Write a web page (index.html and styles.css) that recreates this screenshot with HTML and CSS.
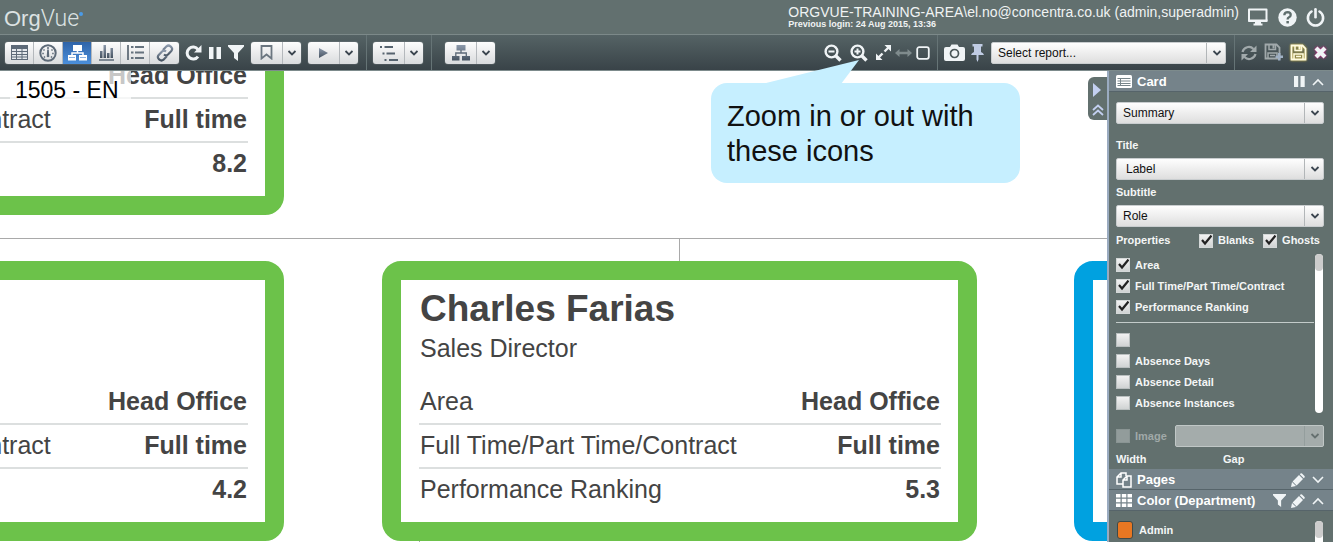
FILE: index.html
```html
<!DOCTYPE html>
<html lang="en">
<head>
<meta charset="utf-8">
<title>OrgVue</title>
<link rel="stylesheet" href="styles.css">
</head>
<body>
<svg class="defs" aria-hidden="true">
  <linearGradient id="steel" x1="0" y1="0" x2="0" y2="1"><stop offset="0" stop-color="#8c99ab"/><stop offset="1" stop-color="#465361"/></linearGradient>
  <symbol id="chev" viewBox="0 0 10 8"><path d="M1.500 2 5 5.500 8.500 2" fill="none" stroke="currentColor" stroke-width="1.800"/></symbol>
  <symbol id="pencil" viewBox="0 0 14 14"><path d="M0 14 1 9 5 13zM1.600 8.400 8 2 12 6 5.600 12.400zM8.800 1.200 9.500.5q.8-.6 1.500 0l2.500 2.500q.6.800 0 1.500l-.7.700z" fill="currentColor"/></symbol>
  <symbol id="funnel" viewBox="0 0 16 16"><path d="M0 0h16v1.500L10 8v8l-4-3V8L0 1.500z" fill="currentColor"/></symbol>
  <symbol id="disk" viewBox="0 0 17 17"><path d="M1.500 1.500h11l3 3v11h-14z" fill="none" stroke="currentColor" stroke-width="1.800"/><path d="M5 2v4.500h6.500V2M4 15.500V10h9v5.500M6 12.500h5" fill="none" stroke="currentColor" stroke-width="1.500"/><path d="M8.500 2h2v3.500h-2z" fill="currentColor"/></symbol>
</svg>

<header class="masthead">
  <div class="logo"><span class="logo-org">Org</span><span class="logo-vue">Vue</span><i class="logo-dot"></i></div>
  <div class="account">
    <div class="user">ORGVUE-TRAINING-AREA\el.no@concentra.co.uk (admin,superadmin)</div>
    <div class="login">Previous login: 24 Aug 2015, 13:36</div>
  </div>
  <div class="session">
    <button class="icon" aria-label="Display"><svg width="22" height="18" viewBox="0 0 22 18"><path d="M2 1.500h17.500v11.500H2z" fill="none" stroke="currentColor" stroke-width="2" stroke-linejoin="round"/><path d="M1.500 11.500h19v2h-19zM8 13h6v2.500h1.500v2h-9v-2H8z" fill="currentColor"/></svg></button>
    <button class="icon" aria-label="Help"><svg width="19" height="19" viewBox="0 0 19 19"><circle cx="9.500" cy="9.500" r="9.200" fill="currentColor"/><path d="M6.300 7.300Q6.500 4.200 9.700 4.200 12.800 4.400 12.700 7 12.600 8.500 11 9.300 9.600 10 9.600 11.500" fill="none" stroke="#5f6e6d" stroke-width="2.300"/><path d="M8.400 13h2.500v2.400H8.400z" fill="#5f6e6d"/></svg></button>
    <button class="icon" aria-label="Log out"><svg width="19" height="19" viewBox="0 0 19 19"><path d="M5.500 3.500a7.600 7.600 0 1 0 8 0" fill="none" stroke="currentColor" stroke-width="2.600" stroke-linecap="round"/><path d="M9.500 1.300v8" stroke="currentColor" stroke-width="2.600" stroke-linecap="round"/></svg></button>
  </div>
</header>

<nav class="toolbar">
  <div class="segments">
    <button aria-label="Table"><svg width="17" height="15" viewBox="0 0 17 15"><path d="M0 0h17v15H0z" fill="#5d6a78"/><path d="M1 4h4v2H1zM6 4h4.500v2H6zM11.500 4H16v2h-4.500zM1 7h4v2H1zM6 7h4.500v2H6zM11.500 7H16v2h-4.500zM1 10h4v1.500H1zM6 10h4.500v1.500H6zM11.500 10H16v1.500h-4.500zM1 12.500h4V14H1zM6 12.500h4.500V14H6zM11.500 12.500H16V14h-4.500z" fill="#e4e8ec"/></svg></button>
    <button aria-label="Dashboard"><svg width="18" height="18" viewBox="0 0 18 18"><circle cx="9" cy="9" r="7.700" fill="none" stroke="#5d6a78" stroke-width="2"/><path d="M9 3v2M4.500 5.500l1 1M13.500 5.500l-1 1M3.300 9.500h1.500M13.200 9.500h1.500M5 13.500l1-1M13 13.500l-1-1" stroke="#5d6a78" stroke-width="1.500"/><path d="M8.200 5.500h1.600l.4 6a1.300 1.300 0 1 1-2.400 0z" fill="#5d6a78"/></svg></button>
    <button class="on" aria-label="Organisation chart"><svg width="19" height="16" viewBox="0 0 19 16"><path d="M5 0h9v6H5zM0 10h8v5.500H0zM11 10h8v5.500h-8z" fill="#fff"/><path d="M9.500 5v3M4 11V8h11v3" fill="none" stroke="#fff" stroke-width="1.500"/><path d="M1 12.500h6M12 12.500h6" stroke="#8fb4e0"/></svg></button>
    <button aria-label="Bar chart"><svg width="17" height="17" viewBox="0 0 17 17"><path d="M2 7h2.500v7H2zM5.500 1H8v13H5.500zM9 9h2.500v5H9zM12.500 4H15v10h-2.500z" fill="url(#steel)"/><path d="M1 16h15" stroke="#5d6a78" stroke-width="1.500"/></svg></button>
    <button aria-label="List"><svg width="17" height="15" viewBox="0 0 17 15"><path d="M1 0v15" stroke="#465361" stroke-width="1.500"/><path d="M4 2h2.500M4 7.500h2.500M4 13h2.500M8 2h9M8 7.500h9M8 13h9" stroke="#66737f" stroke-width="2"/></svg></button>
    <button aria-label="Link"><svg width="18" height="18" viewBox="0 0 18 18"><g fill="none" stroke="url(#steel)" stroke-width="2.200"><path d="m7 6 3.500-3.700q2-1.600 4 0l.8.800q1.700 2 0 3.900L12 10.500q-2 1.700-4 0"/><path d="m11 12-3.500 3.700q-2 1.600-4 0l-.8-.8q-1.700-2 0-3.900L6 7.500q2-1.700 4 0"/></g></svg></button>
  </div>
  <div class="glyphs left">
    <button class="icon" aria-label="Reload"><svg width="17" height="16" viewBox="0 0 17 16"><path d="M13 11.500a6 6 0 1 1 0-7" fill="none" stroke="currentColor" stroke-width="3"/><path d="M16.500 0v7.500H9z" fill="currentColor"/></svg></button>
    <button class="icon" aria-label="Pause"><svg width="14" height="14" viewBox="0 0 14 14"><path d="M1 1h4.500v12H1zM8.500 1H13v12H8.500z" fill="currentColor"/></svg></button>
    <button class="icon" aria-label="Filter"><svg width="16" height="16"><use href="#funnel"/></svg></button>
  </div>
  <div class="split"><button aria-label="Bookmarks"><svg width="13" height="15" viewBox="0 0 13 15"><path d="M1.500 1h10v12.500l-5-4-5 4z" fill="none" stroke="#6b7680" stroke-width="1.800"/></svg></button><button class="drop" aria-label="Bookmark menu"><svg width="10" height="8"><use href="#chev"/></svg></button></div>
  <div class="split"><button aria-label="Play"><svg width="9" height="10" viewBox="0 0 9 10"><path d="M0 0 9 5 0 10z" fill="url(#steel)"/></svg></button><button class="drop" aria-label="Play menu"><svg width="10" height="8"><use href="#chev"/></svg></button></div>
  <i class="rule"></i>
  <div class="split"><button aria-label="Levels"><svg width="18" height="16" viewBox="0 0 18 16"><path d="M0 2h2M4.500 2H13M2.500 8.500h2M6.500 8.500H15M4.500 15h2M9 15h9" stroke="#56636f" stroke-width="2"/></svg></button><button class="drop" aria-label="Levels menu"><svg width="10" height="8"><use href="#chev"/></svg></button></div>
  <i class="rule"></i>
  <div class="split wide"><button aria-label="Layout"><svg width="18" height="16" viewBox="0 0 18 16"><path d="M4.500 0h9v5.500h-9zM0 11h7.500v4.500H0zM10 11h8v4.500h-8z" fill="url(#steel)"/><path d="M9 5v3M3.800 11V8h10.500v3" fill="none" stroke="#5d6a78" stroke-width="1.300"/></svg></button><button class="drop" aria-label="Layout menu"><svg width="10" height="8"><use href="#chev"/></svg></button></div>

  <div class="glyphs view">
    <button class="icon" aria-label="Zoom out"><svg width="18" height="18" viewBox="0 0 18 18"><circle cx="7.500" cy="7.500" r="5.900" fill="none" stroke="currentColor" stroke-width="2.400"/><path d="m12 12 4.500 4.500" stroke="currentColor" stroke-width="3.400"/><path d="M4.500 7.500h6" stroke="currentColor" stroke-width="2"/></svg></button>
    <button class="icon" aria-label="Zoom in"><svg width="18" height="18" viewBox="0 0 18 18"><circle cx="7.500" cy="7.500" r="5.900" fill="none" stroke="currentColor" stroke-width="2.400"/><path d="m12 12 4.500 4.500" stroke="currentColor" stroke-width="3.400"/><path d="M4.500 7.500h6M7.500 4.500v6" stroke="currentColor" stroke-width="2"/></svg></button>
    <button class="icon" aria-label="Fit"><svg width="15" height="15" viewBox="0 0 15 15"><path d="M8.500 0H15v6.500zM0 8.500V15h6.500z" fill="currentColor"/><path d="m12.500 2.500-4 4M6.500 8.500l-4 4" stroke="currentColor" stroke-width="2.400"/></svg></button>
    <button class="icon dim" aria-label="Fit width" disabled><svg width="17" height="8" viewBox="0 0 17 8"><path d="M0 4l4.500-4v2.800h8V0L17 4l-4.500 4V5.200h-8V8z" fill="currentColor"/></svg></button>
    <button class="icon" aria-label="Actual size"><svg width="14" height="14" viewBox="0 0 14 14"><rect x="1.200" y="1.200" width="11.600" height="11.600" rx="2" fill="none" stroke="currentColor" stroke-width="1.800"/></svg></button>
  </div>
  <i class="rule"></i>
  <div class="glyphs report">
    <button class="icon" aria-label="Snapshot"><svg width="21" height="17" viewBox="0 0 21 17"><path d="M2 3h4l1.500-2.500h6L15 3h4q2 0 2 2v10q0 2-2 2H2q-2 0-2-2V5q0-2 2-2z" fill="currentColor"/><circle cx="10.500" cy="9.500" r="4" fill="none" stroke="#4b5759" stroke-width="1.700"/></svg></button>
    <button class="icon pin" aria-label="Pin"><svg width="13" height="18" viewBox="0 0 13 18"><path d="M1.500 0h10v2.500H10V8q2.500 1 3 3H7.500v4.500L6.500 18l-1-2.500V11H0q.5-2 3-3V2.500H1.500z" fill="currentColor"/></svg></button>
  </div>
  <div class="pick pick-report"><select aria-label="Report"><option>Select report...</option></select><span class="pick-arrow"><svg width="10" height="8"><use href="#chev"/></svg></span></div>
  <i class="rule"></i>
  <div class="glyphs save">
    <button class="icon faded" aria-label="Refresh data"><svg width="16" height="16" viewBox="0 0 16 16"><path d="M1.500 7a6.500 6.500 0 0 1 11-3M14.500 9a6.500 6.500 0 0 1-11 3" fill="none" stroke="currentColor" stroke-width="2.200"/><path d="M15.500.5V7H9zM.5 15.500V9H7z" fill="currentColor"/></svg></button>
    <button class="icon faded" aria-label="Save as"><svg width="19" height="19" viewBox="0 0 19 19"><use href="#disk" width="17" height="17"/><path d="M11.500 12.500h2.500V10h2.500v2.500H19V15h-2.500v2.500H14V15h-2.500z" fill="#9fb0c4"/></svg></button>
    <button class="icon gold" aria-label="Save"><svg width="17" height="17"><use href="#disk"/></svg></button>
    <button class="icon rose" aria-label="Discard"><svg width="13" height="13" viewBox="0 0 13 13"><path d="m2 2 9 9M11 2l-9 9" stroke="currentColor" stroke-width="4.200"/></svg></button>
  </div>
</nav>

<div class="workspace">
  <main class="chart">
    <i class="wire wire-across"></i><i class="wire wire-down"></i><i class="wire wire-below"></i>
    <article class="node upper">
      <table><tr><th>Area</th><td>Head Office</td></tr><tr><th>Full Time/Part Time/Contract</th><td>Full time</td></tr><tr><th>Performance Ranking</th><td>8.2</td></tr></table>
    </article>
    <article class="node west">
      <table><tr><th>Area</th><td>Head Office</td></tr><tr><th>Full Time/Part Time/Contract</th><td>Full time</td></tr><tr><th>Performance Ranking</th><td>4.2</td></tr></table>
    </article>
    <article class="node centre">
      <h2>Charles Farias</h2>
      <p>Sales Director</p>
      <table><tr><th>Area</th><td>Head Office</td></tr><tr><th>Full Time/Part Time/Contract</th><td>Full time</td></tr><tr><th>Performance Ranking</th><td>5.3</td></tr></table>
    </article>
    <article class="node east"></article>
    <div class="caption">1505 - EN</div>
  </main>

  <aside class="panel">
    <div class="handle">
      <button class="icon" aria-label="Collapse panel"><svg width="9" height="14" viewBox="0 0 9 14"><path d="M0 0 8 7 0 14z" fill="currentColor"/></svg></button>
      <button class="icon" aria-label="Collapse sections"><svg width="12" height="12" viewBox="0 0 12 12"><path d="m1 6 5-4.500L11 6M1 11l5-4.500L11 11" fill="none" stroke="currentColor" stroke-width="1.800"/></svg></button>
    </div>
    <div class="section-head">
      <svg width="16" height="13" viewBox="0 0 16 13"><rect width="16" height="13" rx="1.500" fill="#fff"/><path d="M1.500 3.500h13M1.500 6h13M1.500 8.500h13M1.500 10.500h13M4.500 4v7" stroke="#77858a"/></svg>
      <h3>Card</h3>
      <button class="icon" aria-label="Pause card"><svg width="11" height="11" viewBox="0 0 11 11"><path d="M0 0h4.200v11H0zM6.500 0h4.200v11H6.500z" fill="currentColor"/></svg></button>
      <button class="icon" aria-label="Collapse card"><svg class="caret" width="12" height="8" viewBox="0 0 12 8"><path d="M1 7 6 2l5 5" fill="none" stroke="currentColor" stroke-width="1.600"/></svg></button>
    </div>
    <div class="card-body">
      <div class="pick first"><select aria-label="Card"><option>Summary</option></select><span class="pick-arrow"><svg width="10" height="8"><use href="#chev"/></svg></span></div>
      <label class="field" for="title">Title</label>
      <div class="pick"><select id="title" class="indent"><option>Label</option></select><span class="pick-arrow"><svg width="10" height="8"><use href="#chev"/></svg></span></div>
      <label class="field" for="subtitle">Subtitle</label>
      <div class="pick"><select id="subtitle"><option>Role</option></select><span class="pick-arrow"><svg width="10" height="8"><use href="#chev"/></svg></span></div>
      <div class="prop-head"><span>Properties</span><label class="check"><input type="checkbox" checked>Blanks</label><label class="check"><input type="checkbox" checked>Ghosts</label></div>
      <div class="prop-list">
        <div class="props">
          <label class="check"><input type="checkbox" checked>Area</label>
          <label class="check"><input type="checkbox" checked>Full Time/Part Time/Contract</label>
          <label class="check"><input type="checkbox" checked>Performance Ranking</label>
          <hr>
          <label class="check"><input type="checkbox" aria-label="Blank property"></label>
          <label class="check"><input type="checkbox">Absence Days</label>
          <label class="check"><input type="checkbox">Absence Detail</label>
          <label class="check"><input type="checkbox">Absence Instances</label>
        </div>
        <div class="track"><i></i></div>
      </div>
      <div class="image-row">
        <label class="check"><input type="checkbox" disabled>Image</label>
        <div class="pick"><select aria-label="Image property" disabled><option></option></select><span class="pick-arrow"><svg width="10" height="8"><use href="#chev"/></svg></span></div>
      </div>
      <div class="sizes"><span>Width</span><span>Gap</span></div>
    </div>
    <div class="section-head">
      <svg width="16" height="16" viewBox="0 0 16 16"><g fill="none" stroke="#fff" stroke-width="1.500"><path d="M7 12H1V5l4-4h5v3M5 1v4H1"/><path d="M7 8l4-4h4v11H7zM11 4v4H7"/></g></svg>
      <h3>Pages</h3>
      <button class="icon" aria-label="Edit pages"><svg width="14" height="14"><use href="#pencil"/></svg></button>
      <button class="icon" aria-label="Expand pages"><svg class="caret" width="12" height="8" viewBox="0 0 12 8"><path d="m1 1 5 5 5-5" fill="none" stroke="currentColor" stroke-width="1.600"/></svg></button>
    </div>
    <div class="section-head">
      <svg width="16" height="13" viewBox="0 0 16 13"><path d="M0 0h4.500v3.500H0zM5.800 0h4.500v3.500H5.800zM11.500 0H16v3.500h-4.500zM0 4.700h4.500v3.500H0zM5.800 4.700h4.500v3.500H5.800zM11.500 4.700H16v3.500h-4.500zM0 9.500h4.500V13H0zM5.800 9.500h4.500V13H5.800zM11.500 9.500H16V13h-4.500z" fill="#fff"/></svg>
      <h3>Color (Department)</h3>
      <button class="icon" aria-label="Filter colors"><svg width="13" height="13" viewBox="0 0 16 16"><use href="#funnel"/></svg></button>
      <button class="icon" aria-label="Edit colors"><svg width="14" height="14"><use href="#pencil"/></svg></button>
      <button class="icon" aria-label="Collapse colors"><svg class="caret" width="12" height="8" viewBox="0 0 12 8"><path d="M1 7 6 2l5 5" fill="none" stroke="currentColor" stroke-width="1.600"/></svg></button>
    </div>
    <div class="color-body">
      <div class="legend"><i class="swatch"></i><span>Admin</span></div>
      <div class="track"><i></i></div>
    </div>
  </aside>
</div>

<div class="callout">
  <svg class="tail" width="98" height="24" viewBox="0 0 98 24"><path d="M0 24 97 0 79 24z" fill="#c6efff"/></svg>
  Zoom in or out with these icons
</div>
</body>
</html>
```
FILE: styles.css
```css
* { box-sizing: border-box; }
body {
  margin: 0;
  height: 100vh;
  display: flex;
  flex-direction: column;
  position: relative;
  overflow: hidden;
  background: #fff;
  font-family: "Liberation Sans", Arial, sans-serif;
  font-size: 12px;
}
button { margin: 0; padding: 0; border: 0; background: none; font: inherit; }
svg { display: block; flex: none; }
.defs { position: absolute; width: 0; height: 0; }
.icon { display: flex; color: #f0f4f6; }

.masthead {
  flex: none;
  display: flex;
  height: 34px;
  padding: 0 8px 0 4px;
  background: #62706f;
  color: #f0f3f3;
}
.logo { display: flex; flex: 1; font-size: 22px; line-height: 37px; color: #dce2e2; }
.logo-vue { font-family: Roboto, sans-serif; font-weight: 300; font-size: 23px; }
.logo-dot { width: 4px; height: 4px; margin-top: 12px; border-radius: 2px; background: #4a9be8; }
.user { padding-top: 5px; font-size: 14px; line-height: 14px; }
.login { font-size: 9px; font-weight: bold; line-height: 10px; }
.session { display: flex; align-items: center; gap: 9px; padding-left: 8px; }

.toolbar {
  flex: none;
  display: flex;
  align-items: center;
  height: 37px;
  padding: 0 6px 0 5px;
  border-top: 1px solid #7c8989;
  border-bottom: 1px solid #7d8b8c;
  background: linear-gradient(#556365, #394348);
}
.segments, .split {
  display: flex;
  height: 22px;
  border-radius: 3px;
  overflow: hidden;
  background: linear-gradient(#fdfdfd, #d9dbdd);
  box-shadow: 0 0 1px #cfd6da;
}
.segments button { display: flex; align-items: center; justify-content: center; width: 29px; border-right: 1px solid #b4b8bc; }
.segments button:last-child { border-right: 0; }
.segments .on { background: linear-gradient(#2f64a8, #4b8fdc); }
.glyphs { display: flex; align-items: center; }
.glyphs.left { gap: 6px; padding: 0 7px 0 6px; }
.split { width: 50px; margin-right: 7px; color: #3c4650; }
.split button { display: flex; flex: 1; align-items: center; justify-content: center; }
.split .drop { flex: none; width: 19px; border-left: 1px solid #b4b8bc; color: inherit; }
.split.wide { margin-left: 7px; }
.rule { align-self: stretch; width: 1px; margin: 0 6px 0 1px; background: #667476; }
.view { margin-left: auto; gap: 8px; padding-right: 6px; }
.view .dim { margin: 0 -4px; color: #7f8b8d; }
.report { gap: 6px; padding-right: 7px; }
.report .pin { color: #c0cce4; }
.save { gap: 7px; }
.faded { color: #a1a9ab; }
.gold { color: #fffbe0; filter: drop-shadow(0 0 1px #d8bd40); }
.rose { filter: drop-shadow(0 0 1px #e0188c); }

.pick { position: relative; display: flex; height: 22px; color: #3c4650; }
.pick select {
  appearance: none;
  flex: 1;
  min-width: 0;
  padding: 0 24px 0 6px;
  border: 1px solid #c9cdcf;
  border-radius: 2px;
  background: linear-gradient(#fefefe, #dedede);
  color: #111;
  font: 12px "Liberation Sans", Arial, sans-serif;
}
.pick .indent { padding-left: 9px; }
.pick-arrow {
  position: absolute;
  right: 0;
  top: 1px;
  bottom: 1px;
  width: 20px;
  display: flex;
  align-items: center;
  justify-content: center;
  border-left: 1px solid #b2b6b8;
  pointer-events: none;
}
.pick-report { width: 235px; margin-right: 7px; }

.workspace { flex: 1; display: flex; min-height: 0; }
.chart { position: relative; flex: 1; overflow: hidden; color: #444; }
.wire { position: absolute; background: #a9a9a9; }
.wire-across { left: 0; right: 0; top: 167px; height: 1px; }
.wire-down { left: 679px; top: 167px; width: 1px; height: 23px; }
.wire-below { left: 419px; top: 470px; width: 1px; height: 20px; }
.node {
  position: absolute;
  display: flex;
  flex-direction: column;
  width: 595px;
  height: 280px;
  padding: 8px 17px 9px 18px;
  border: 19px solid #6cc24a;
  border-radius: 19px;
  background: #fff;
}
.upper { left: -311px; top: -136px; }
.west { left: -311px; top: 190px; }
.centre { left: 382px; top: 190px; }
.east { left: 1074px; top: 190px; border-color: #00a1e0; }
.node h2 { margin: 0; padding-left: 1px; font-size: 37px; line-height: 42px; }
.node p { margin: 0; padding-left: 1px; font-size: 25px; line-height: 36px; }
.node table { width: 100%; margin-top: auto; border-collapse: collapse; font-size: 25px; line-height: 40px; }
.node th { padding: 0 0 4px 1px; font-weight: normal; text-align: left; }
.node td { padding: 0 1px 4px 0; font-weight: bold; text-align: right; }
.node tr + tr { box-shadow: 0 -2px #dcdfdf; }
.upper th, .west th { padding-left: 8px; }
.caption {
  position: absolute;
  left: 10px;
  top: 0;
  padding: 6px 12px 0 5px;
  background: rgba(255, 255, 255, .7);
  color: #000;
  font-size: 23px;
  line-height: 26px;
}

.panel {
  position: relative;
  flex: none;
  display: flex;
  flex-direction: column;
  width: 226px;
  border-left: 2px solid #9aabc0;
  background: #62706e;
  color: #f4f6f6;
}
.handle {
  position: absolute;
  left: -21px;
  top: 6px;
  display: flex;
  flex-direction: column;
  align-items: center;
  gap: 7px;
  width: 19px;
  height: 43px;
  padding-top: 6px;
  border-radius: 6px 0 0 6px;
  background: #62706e;
}
.handle .icon { color: #c3d0f0; }
.section-head {
  flex: none;
  display: flex;
  align-items: center;
  gap: 5px;
  height: 21px;
  padding: 0 9px 0 7px;
  background: #75838a;
  box-shadow: inset 0 -1px #56646a;
}
.section-head h3 { flex: 1; margin: 0; font-size: 13px; line-height: 20px; color: #fff; }
.section-head .icon:last-child { margin-left: 2px; }
.card-body { flex: none; padding: 10px 9px 0 7px; font-size: 11px; font-weight: bold; }
.first { margin-bottom: 9px; }
.field { display: block; line-height: 25px; }
.prop-head { display: flex; line-height: 27px; }
.prop-head > span { flex: 1; }
.prop-head .check { margin-left: 9px; height: 27px; }
.prop-head .check:last-child { margin-right: 4px; }
.check { display: flex; align-items: center; gap: 5px; height: 21px; }
.check input {
  appearance: none;
  flex: none;
  width: 14px;
  height: 14px;
  margin: 0;
  border: 1px solid #b9bfbf;
  background: linear-gradient(#f2f2f2, #d0d3d3);
}
.check input:checked {
  border-color: #d4d8d8;
  background: url("data:image/svg+xml,%3Csvg xmlns='http://www.w3.org/2000/svg' viewBox='0 0 12 12'%3E%3Cpath d='M2 5 5 8.500 11.500 .5' fill='none' stroke='%23222' stroke-width='2.200'/%3E%3C/svg%3E") center / 12px, linear-gradient(#f2f2f2, #d0d3d3);
}
.prop-list { display: flex; justify-content: space-between; padding-right: 1px; }
.props { width: 198px; }
.props hr { height: 1px; margin: 5px 0 6px; border: 0; background: #c3cbca; }
.track { width: 8px; border-radius: 4px; background: #fff; }
.track i { display: block; height: 17px; border-radius: 4px; background: #ccc; }
.image-row { display: flex; align-items: center; gap: 8px; margin-top: 12px; }
.image-row .check { color: #a0a9a8; }
.image-row input { border-color: #8a9594; background: #929c9b; }
.image-row .pick { flex: 1; color: #65706f; }
.image-row select { border-color: #c0c7c6; background: #a4acab; opacity: 1; }
.image-row .pick-arrow { border-color: #949e9d; }
.sizes { display: grid; grid-template-columns: 107px 1fr; line-height: 19px; padding-top: 3px; }
.color-body { flex: 1; display: flex; justify-content: space-between; min-height: 0; padding: 10px 10px 0 8px; font-size: 11px; font-weight: bold; }
.legend { display: flex; gap: 6px; line-height: 18px; }
.swatch { width: 16px; height: 18px; border: 1px solid #3f4a49; border-radius: 3px; background: #e87722; }
.color-body .track { border-radius: 4px 4px 0 0; }

.callout {
  position: absolute;
  right: 313px;
  top: 83px;
  width: 309px;
  padding: 16px 30px 14px 16px;
  border-radius: 16px;
  background: #c6efff;
  color: #111;
  font-size: 29px;
  line-height: 35px;
}
.tail { position: absolute; left: 51px; top: -23px; }
```
